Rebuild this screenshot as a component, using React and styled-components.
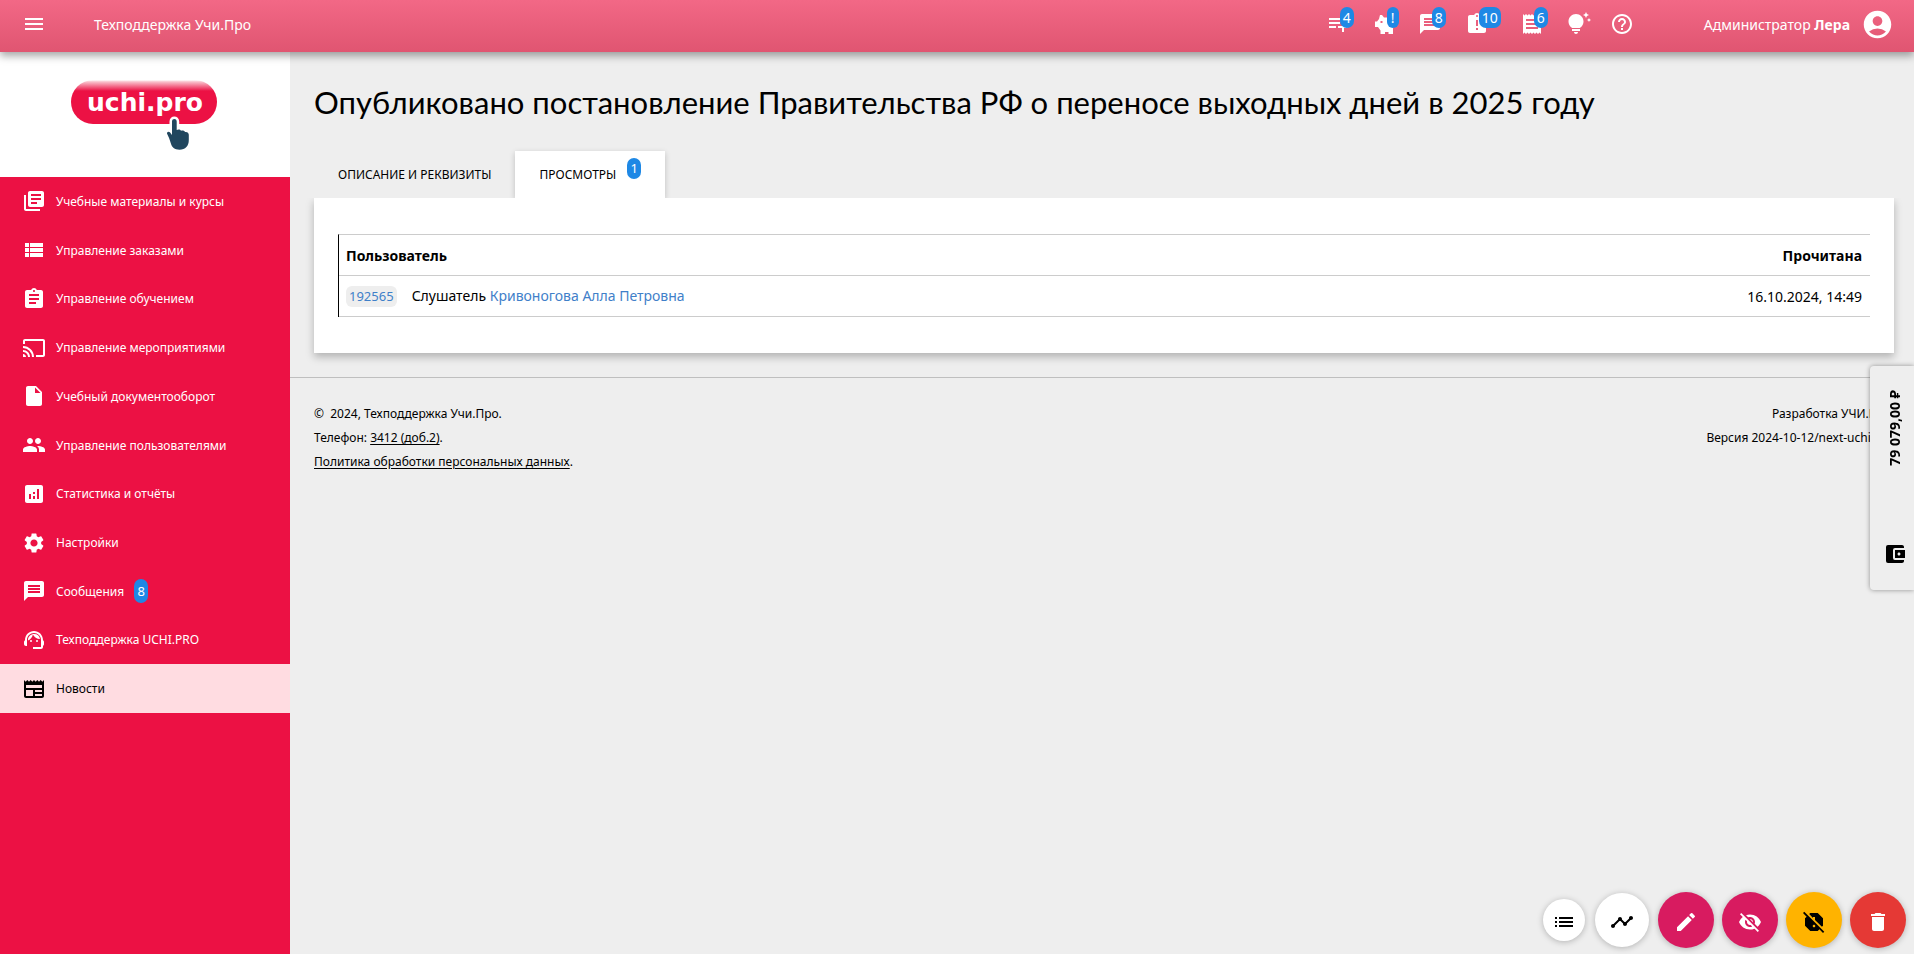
import React, { useState } from 'react'
import styled, { createGlobalStyle, css } from 'styled-components'
import {
    MdMenu, MdPlaylistAdd, MdMessage, MdAssignmentLate, MdReceipt,
    MdTipsAndUpdates, MdHelpOutline, MdAccountCircle, MdLibraryBooks, MdViewList,
    MdAssignment, MdCast, MdInsertDriveFile, MdPeople, MdAnalytics, MdSettings,
    MdSupportAgent, MdNewspaper, MdAccountBalanceWallet, MdList, MdTimeline,
    MdEdit, MdVisibilityOff, MdReportOff, MdDelete
} from 'react-icons/md'

const GlobalStyle = createGlobalStyle`
    *, *::before, *::after {
        box-sizing: border-box;
    }

    body {
        margin: 0;
        background: #eee;
        color: #000;
        font-family: "Noto Sans", "Open Sans", sans-serif;
        font-size: 14px;
    }

    svg {
        flex: none;
        display: block;
    }
`

const Page = styled.div`
    min-height: 100vh;
    display: flex;
    flex-direction: column;
`

const Header = styled.header`
    position: relative;
    z-index: 2;
    height: 52px;
    padding: 0 20px 4px 22px;
    display: flex;
    align-items: center;
    color: #fff;
    background: linear-gradient(#f26886, #e05571);
    box-shadow: 0 4px 8px rgba(0, 0, 0, 0.35);
`

const IconButton = styled.button`
    display: flex;
    align-items: center;
    padding: 0;
    border: 0;
    background: none;
    color: inherit;
    font: inherit;
    cursor: pointer;
`

const SiteName = styled.span`
    margin-left: 48px;
    font-size: 14px;
`

const Actions = styled.nav`
    display: flex;
    align-items: center;
    gap: 19px;
    margin-left: auto;
`

const Badge = styled.span`
    display: inline-block;
    min-width: 14px;
    padding: 0 3px;
    border-radius: 7px;
    background: #1e88e5;
    color: #fff;
    font-size: 13px;
    line-height: ${p => (p.$tall ? 24 : 21)}px;
    text-align: center;
`

const ActionBadge = styled(Badge)`
    min-width: 12px;
    margin: 0 0 13px -10px;
    font-size: 14px;
`

const User = styled.a`
    display: flex;
    align-items: center;
    gap: 11px;
    margin-left: 70px;
    color: #fff;
    text-decoration: none;
`

const Body = styled.div`
    flex: 1;
    display: flex;
`

const Sidebar = styled.aside`
    flex: none;
    width: 290px;
    background: #ec1144;
`

const LogoLink = styled.a`
    display: flex;
    justify-content: center;
    padding: 26px 2px 0 0;
    height: 125px;
    background: #fff;
`

const Menu = styled.ul`
    display: flex;
    flex-direction: column;
    height: 536px;
    margin: 0;
    padding: 0;
    list-style: none;
`

const MenuItem = styled.li`
    flex: 1;
    display: flex;
`

const MenuLink = styled.a`
    flex: 1;
    display: flex;
    align-items: center;
    gap: 10px;
    padding-left: 22px;
    color: #fff;
    font-size: 12px;
    text-decoration: none;

    ${p => p.$active && css`
        background: #ffdce1;
        color: #000;
    `}
`

const Main = styled.main`
    flex: 1;
    min-width: 0;
`

const Content = styled.div`
    padding: 30px 20px 24px 24px;
    border-bottom: 1px solid #bfbfbf;
`

const Title = styled.h1`
    margin: 0;
    font-family: Lato, "Noto Sans", sans-serif;
    font-size: 31px;
    font-weight: 400;
    line-height: 40px;
`

const Tabs = styled.div`
    display: flex;
    margin-top: 29px;
`

const Tab = styled.button`
    display: flex;
    align-items: center;
    gap: 11px;
    height: 47px;
    padding: 0 24px;
    border: 0;
    background: none;
    color: #000;
    font: inherit;
    font-size: 12px;
    text-transform: uppercase;
    cursor: pointer;

    ${p => p.$active && css`
        background: #fff;
        box-shadow: 0 2px 6px rgba(0, 0, 0, 0.2);
    `}
`

const TabBadge = styled(Badge)`
    margin-bottom: 13px;
`

const Card = styled.section`
    position: relative;
    padding: 36px 24px;
    background: #fff;
    box-shadow: 0 4px 8px rgba(0, 0, 0, 0.25);
    clip-path: inset(0 -16px -16px -16px);
`

const Table = styled.table`
    width: 100%;
    border-collapse: separate;
    border-spacing: 0;
    border-left: 1px solid #000;
    border-top: 1px solid #ccc;
    font-size: 14px;
`

const cell = css`
    height: 41px;
    padding: 0 8px 0 7px;
    border-bottom: 1px solid #ccc;
    text-align: ${p => (p.$right ? 'right' : 'left')};
`

const Th = styled.th`${cell}`
const Td = styled.td`${cell}`

const Link = styled.a`
    color: #3f80c9;
    text-decoration: none;
`

const Chip = styled(Link)`
    display: inline-block;
    margin-right: 15px;
    padding: 0 3px;
    border-radius: 6px;
    background: #eee;
    font-size: 13px;
    line-height: 21px;
`

const Footer = styled.footer`
    display: flex;
    justify-content: space-between;
    padding: 24px 20px 24px 24px;
    font-size: 12px;
    line-height: 24px;

    p {
        margin: 0;
    }

    a {
        color: #000;
        text-underline-offset: 2px;
    }
`

const Vendor = styled.div`
    text-align: right;
`

const Balance = styled.aside`
    position: fixed;
    top: 366px;
    right: 0;
    z-index: 3;
    display: flex;
    flex-direction: column;
    align-items: center;
    justify-content: space-between;
    width: 44px;
    height: 224px;
    padding: 24px 0 24px 6px;
    border-radius: 4px 0 0 4px;
    background: #eee;
    box-shadow: 0 0 5px rgba(0, 0, 0, 0.4);
`

const Sum = styled.b`
    writing-mode: vertical-rl;
    transform: rotate(180deg);
    font-size: 14px;
    line-height: 20px;
`

const Fabs = styled.div`
    position: fixed;
    right: 8px;
    bottom: 6px;
    z-index: 3;
    display: flex;
    align-items: center;
    gap: 8px;
`

const Fab = styled.button`
    display: flex;
    align-items: center;
    justify-content: center;
    width: ${p => p.$size}px;
    height: ${p => p.$size}px;
    padding: 4px 0 0;
    border: 0;
    border-radius: 50%;
    background: ${p => p.$bg};
    color: ${p => p.$color};
    box-shadow: 0 1px 6px rgba(0, 0, 0, 0.25);
    cursor: pointer;
`

const PlainFab = styled(Fab)`
    margin: 0 1px;
`

function PiggyBank({ size }) {
    return (
        <svg width={size} height={size} viewBox="0 0 24 24" fill="currentColor">
            <path
                fillRule="evenodd"
                d="M7 3h2l2 2.500h6c3 0 5 2.500 5 5.500 0 2.500-1 4-2 5.200V22h-4.500v-2H12v2H7.500v-3.500L5 15H2V9.500h2L6 7zM7.500 9v2h2V9z"
            />
        </svg>
    )
}

const actions = [
    { icon: MdPlaylistAdd, title: 'Заявки', count: '4' },
    { icon: PiggyBank, title: 'Баланс', count: '!' },
    { icon: MdMessage, title: 'Сообщения', count: '8' },
    { icon: MdAssignmentLate, title: 'Задания', count: '10' },
    { icon: MdReceipt, title: 'Счета', count: '6' },
    { icon: MdTipsAndUpdates, title: 'Идеи' },
    { icon: MdHelpOutline, title: 'Помощь' }
]

const menu = [
    { icon: MdLibraryBooks, label: 'Учебные материалы и курсы' },
    { icon: MdViewList, label: 'Управление заказами' },
    { icon: MdAssignment, label: 'Управление обучением' },
    { icon: MdCast, label: 'Управление мероприятиями' },
    { icon: MdInsertDriveFile, label: 'Учебный документооборот' },
    { icon: MdPeople, label: 'Управление пользователями' },
    { icon: MdAnalytics, label: 'Статистика и отчёты' },
    { icon: MdSettings, label: 'Настройки' },
    { icon: MdMessage, label: 'Сообщения', count: 8 },
    { icon: MdSupportAgent, label: 'Техподдержка UCHI.PRO' },
    { icon: MdNewspaper, label: 'Новости', active: true }
]

const fabs = [
    { icon: MdEdit, title: 'Редактировать', bg: '#d81b60', color: '#fff' },
    { icon: MdVisibilityOff, title: 'Скрыть', bg: '#d81b60', color: '#fff' },
    { icon: MdReportOff, title: 'Снять важность', bg: '#ffb300', color: '#000' },
    { icon: MdDelete, title: 'Удалить', bg: '#e53935', color: '#fff' }
]

function Logo() {
    return (
        <svg width="148" height="76" viewBox="0 0 148 76">
            <defs>
                <linearGradient id="gloss" x1="0" y1="0" x2="0" y2="1">
                    <stop offset="0" stopColor="#fff" />
                    <stop offset="0.04" stopColor="#f9c3cd" />
                    <stop offset="0.25" stopColor="#ec1144" />
                </linearGradient>
            </defs>
            <rect x="1" y="2" width="146" height="44" rx="22" fill="url(#gloss)" />
            <text
                x="75"
                y="33"
                textAnchor="middle"
                fontFamily="DejaVu Sans"
                fontWeight="700"
                fontSize="25"
                fill="#fff"
            >
                uchi.pro
            </text>
            <path
                d="M102 43.500c0-3.300 4.700-3.300 4.700 0V52c1.400-1 3.700-.7 4.300.8 1.500-.7 3.500-.2 4 1.200 1.900-.5 3.800.6 3.800 2.700V62c0 6-3.300 9.700-9.300 9.700-5 0-7.600-2.300-8.800-6.700-.9-3.500-2.300-6.700-3.500-9-.9-2 1.300-3.200 2.700-1.700l2.100 2.700z"
                fill="#21475f"
                stroke="#fff"
                strokeWidth="5"
                strokeLinejoin="round"
                paintOrder="stroke"
            />
        </svg>
    )
}

function App() {
    const [tab, setTab] = useState('views')

    return (
        <Page>
            <GlobalStyle />
            <Header>
                <IconButton aria-label="Меню"><MdMenu size={24} /></IconButton>
                <SiteName>Техподдержка Учи.Про</SiteName>
                <Actions>
                    {actions.map(({ icon: Icon, title, count }) => (
                        <IconButton key={title} aria-label={title}>
                            <Icon size={24} />
                            {count && <ActionBadge>{count}</ActionBadge>}
                        </IconButton>
                    ))}
                </Actions>
                <User href="#profile">
                    <span>Администратор <b>Лера</b></span>
                    <MdAccountCircle size={33} />
                </User>
            </Header>

            <Body>
                <Sidebar>
                    <LogoLink href="#home" aria-label="uchi.pro"><Logo /></LogoLink>
                    <Menu>
                        {menu.map(({ icon: Icon, label, count, active }) => (
                            <MenuItem key={label}>
                                <MenuLink href="#menu" $active={active}>
                                    <Icon size={24} />
                                    {label}
                                    {count && <Badge $tall>{count}</Badge>}
                                </MenuLink>
                            </MenuItem>
                        ))}
                    </Menu>
                </Sidebar>

                <Main>
                    <Content>
                        <Title>Опубликовано постановление Правительства РФ о переносе выходных дней в 2025 году</Title>
                        <Tabs role="tablist">
                            <Tab
                                role="tab"
                                aria-selected={tab === 'about'}
                                $active={tab === 'about'}
                                onClick={() => setTab('about')}
                            >
                                Описание и реквизиты
                            </Tab>
                            <Tab
                                role="tab"
                                aria-selected={tab === 'views'}
                                $active={tab === 'views'}
                                onClick={() => setTab('views')}
                            >
                                Просмотры
                                <TabBadge>1</TabBadge>
                            </Tab>
                        </Tabs>
                        <Card>
                            <Table>
                                <thead>
                                    <tr>
                                        <Th>Пользователь</Th>
                                        <Th $right>Прочитана</Th>
                                    </tr>
                                </thead>
                                <tbody>
                                    <tr>
                                        <Td>
                                            <Chip href="#user">192565</Chip>
                                            Слушатель <Link href="#user">Кривоногова Алла Петровна</Link>
                                        </Td>
                                        <Td $right>16.10.2024, 14:49</Td>
                                    </tr>
                                </tbody>
                            </Table>
                        </Card>
                    </Content>

                    <Footer>
                        <div>
                            <p>©&nbsp; 2024, Техподдержка Учи.Про.</p>
                            <p>Телефон: <a href="#phone">3412 (доб.2)</a>.</p>
                            <p><a href="#policy">Политика обработки персональных данных</a>.</p>
                        </div>
                        <Vendor>
                            <p>Разработка УЧИ.ПРО</p>
                            <p>Версия 2024-10-12/next-uchi-pro</p>
                        </Vendor>
                    </Footer>
                </Main>
            </Body>

            <Balance>
                <Sum>79 079,00 ₽</Sum>
                <MdAccountBalanceWallet size={24} />
            </Balance>

            <Fabs>
                <PlainFab aria-label="Список" $size={42} $bg="#fff" $color="#000">
                    <MdList size={24} />
                </PlainFab>
                <PlainFab aria-label="График" $size={54} $bg="#fff" $color="#000">
                    <MdTimeline size={24} />
                </PlainFab>
                {fabs.map(({ icon: Icon, title, bg, color }) => (
                    <Fab key={title} aria-label={title} $size={56} $bg={bg} $color={color}>
                        <Icon size={24} />
                    </Fab>
                ))}
            </Fabs>
        </Page>
    )
}

export default App
